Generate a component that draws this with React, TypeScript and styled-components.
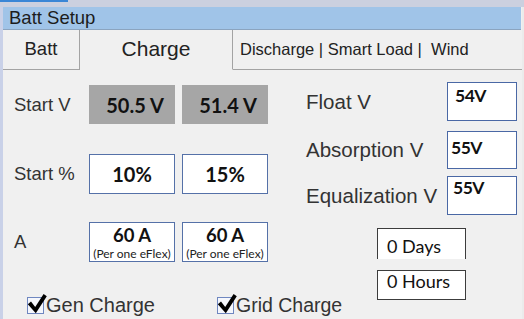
import React from "react";
import styled, { createGlobalStyle } from "styled-components";

const GlobalStyle = createGlobalStyle`
  html, body { margin: 0; padding: 0; background: #f0f0f0; }
  body {
    width: 524px; height: 319px; overflow: hidden;
    font-family: "Liberation Sans", Arial, sans-serif;
  }
  * { box-sizing: border-box; }
`;

const Window = styled.div`
  width: 524px;
  height: 319px;
  display: flex;
  flex-direction: column;
  background: #ebebeb;
`;

const TopStrip = styled.div`
  height: 7px;
  flex-shrink: 0;
  background: #cbd0df;
  display: flex;
`;

const Accent = styled.div`
  width: 68px;
  height: 2px;
  background: #3a86d6;
`;

const Body = styled.div`
  flex: 1;
  display: flex;
  min-height: 0;
`;

const SideStrip = styled.div`
  width: 3px;
  flex-shrink: 0;
  background: #c9d1e8;
`;

const Main = styled.div`
  flex: 1;
  display: flex;
  flex-direction: column;
  background: #f0f0f0;
  margin-right: 2px;
`;

const TitleBar = styled.div`
  height: 23px;
  flex-shrink: 0;
  margin-right: 1px;
  background: #a0c4e8;
  border-bottom: 1px solid #8ba4bf;
  padding-left: 6px;
  font-size: 18.5px;
  line-height: 21px;
  color: #1c1c1c;
`;

const Tabs = styled.div`
  height: 40px;
  flex-shrink: 0;
  display: flex;
`;

const Tab = styled.div<{ $w?: number; $active?: boolean; $size: number; $left?: boolean }>`
  height: 40px;
  ${(p) => (p.$w ? `width: ${p.$w}px; flex-shrink: 0;` : "flex: 1;")}
  display: flex;
  align-items: center;
  justify-content: ${(p) => (p.$left ? "flex-start" : "center")};
  padding-left: ${(p) => (p.$left ? "7px" : "0")};
  padding-bottom: 1px;
  border-right: ${(p) => (p.$w ? "1px solid #a3a3a3" : "none")};
  border-bottom: ${(p) => (p.$active ? "1px solid transparent" : "1px solid #a3a3a3")};
  font-size: ${(p) => p.$size}px;
  color: #222;
  white-space: pre;
`;

const Content = styled.div`
  flex: 1;
  display: flex;
  min-height: 0;
`;

const LeftPane = styled.div`
  width: 300px;
  flex-shrink: 0;
  display: flex;
  flex-direction: column;
  padding-left: 11px;
`;

const FieldRow = styled.div<{ $top: number; $h: number }>`
  display: flex;
  align-items: center;
  margin-top: ${(p) => p.$top}px;
  height: ${(p) => p.$h}px;
`;

const FieldLabel = styled.div`
  width: 75px;
  font-size: 18.5px;
  color: #333;
`;

const BoxGroup = styled.div`
  display: flex;
  gap: 7px;
  height: 100%;
`;

const ValueBox = styled.div<{ $grey?: boolean }>`
  width: 86px;
  height: 100%;
  display: flex;
  flex-direction: column;
  align-items: center;
  justify-content: center;
  background: ${(p) => (p.$grey ? "#a6a6a6" : "#ffffff")};
  border: 1px solid ${(p) => (p.$grey ? "#a6a6a6" : "#5571a8")};
  padding-left: ${(p) => (p.$grey ? "6px" : "0")};
  font-family: Lato, "Open Sans", sans-serif;
  font-weight: 700;
  font-size: 20px;
  color: #111;
`;

const AmpValue = styled.div`
  font-family: Lato, sans-serif;
  font-weight: 700;
  font-size: 18.5px;
  line-height: 22px;
`;

const AmpNote = styled.div`
  font-family: Lato, sans-serif;
  font-weight: 400;
  font-size: 12px;
  line-height: 15px;
  color: #222;
  white-space: nowrap;
`;

const CheckRow = styled.div`
  display: flex;
  align-items: center;
  gap: 62px;
  margin-top: 35px;
  padding-left: 13px;
  height: 17px;
  white-space: nowrap;
`;

const CheckItem = styled.div`
  display: flex;
  align-items: center;
  gap: 2px;
`;

const CheckBox = styled.div`
  position: relative;
  width: 17px;
  height: 17px;
  flex-shrink: 0;
  border: 1px solid #6f87c0;
  background: #f5f7fc;
`;

const CheckMark = styled.svg`
  position: absolute;
  left: -1px;
  top: -2px;
  overflow: visible;
`;

const CheckText = styled.span<{ $size: number }>`
  font-size: ${(p) => p.$size}px;
  color: #333;
`;

const RightPane = styled.div`
  flex: 1;
  display: flex;
  flex-direction: column;
  padding-left: 3px;
`;

const RightRow = styled.div<{ $top: number; $h: number }>`
  display: grid;
  grid-template-columns: 141px 70px;
  align-items: center;
  margin-top: ${(p) => p.$top}px;
  height: ${(p) => p.$h}px;
`;

const RightLabel = styled.div`
  font-size: 20.5px;
  color: #333;
  white-space: nowrap;
`;

const SetBox = styled.div<{ $pt: number; $pl: number }>`
  height: 100%;
  background: #fff;
  border: 1px solid #4a68a5;
  padding: ${(p) => p.$pt}px 0 0 ${(p) => p.$pl}px;
  font-family: Lato, sans-serif;
  font-weight: 700;
  font-size: 17.5px;
  line-height: 20px;
  letter-spacing: -0.5px;
  color: #111;
`;

const TimeBox = styled.div<{ $top: number; $h: number; $pt: number; $open?: boolean }>`
  width: 89px;
  height: ${(p) => p.$h}px;
  margin-top: ${(p) => p.$top}px;
  margin-left: 71px;
  background: #fff;
  border: 1px solid #3c3c3c;
  border-bottom: ${(p) => (p.$open ? "none" : "1px solid #3c3c3c")};
  padding: ${(p) => p.$pt}px 0 0 9px;
  font-family: Lato, sans-serif;
  font-size: 18px;
  line-height: 21px;
  color: #111;
`;

const Check = () => (
  <CheckMark width="20" height="20" viewBox="0 0 20 20">
    <path d="M0.8 8.2 L4 5.6 L8.2 11 L16.6 -2 L19.8 0.2 L8.8 17.2 Z" fill="#000" />
  </CheckMark>
);

export default function App() {
  return (
    <>
      <GlobalStyle />
      <Window>
        <TopStrip>
          <Accent />
        </TopStrip>
        <Body>
          <SideStrip />
          <Main>
            <TitleBar>Batt Setup</TitleBar>
            <Tabs>
              <Tab $w={77} $size={18.5}>Batt</Tab>
              <Tab $w={153} $size={21} $active>Charge</Tab>
              <Tab $size={16.5} $left>{"Discharge | Smart Load |  Wind"}</Tab>
            </Tabs>
            <Content>
              <LeftPane>
                <FieldRow $top={15} $h={39}>
                  <FieldLabel>Start V</FieldLabel>
                  <BoxGroup>
                    <ValueBox $grey>50.5 V</ValueBox>
                    <ValueBox $grey>51.4 V</ValueBox>
                  </BoxGroup>
                </FieldRow>
                <FieldRow $top={30} $h={40}>
                  <FieldLabel>Start %</FieldLabel>
                  <BoxGroup>
                    <ValueBox>10%</ValueBox>
                    <ValueBox>15%</ValueBox>
                  </BoxGroup>
                </FieldRow>
                <FieldRow $top={28} $h={40}>
                  <FieldLabel>A</FieldLabel>
                  <BoxGroup>
                    <ValueBox>
                      <AmpValue>60 A</AmpValue>
                      <AmpNote>(Per one eFlex)</AmpNote>
                    </ValueBox>
                    <ValueBox>
                      <AmpValue>60 A</AmpValue>
                      <AmpNote>(Per one eFlex)</AmpNote>
                    </ValueBox>
                  </BoxGroup>
                </FieldRow>
                <CheckRow>
                  <CheckItem>
                    <CheckBox>
                      <Check />
                    </CheckBox>
                    <CheckText $size={20}>Gen Charge</CheckText>
                  </CheckItem>
                  <CheckItem>
                    <CheckBox>
                      <Check />
                    </CheckBox>
                    <CheckText $size={19.5}>Grid Charge</CheckText>
                  </CheckItem>
                </CheckRow>
              </LeftPane>
              <RightPane>
                <RightRow $top={12} $h={39}>
                  <RightLabel>Float V</RightLabel>
                  <SetBox $pt={3} $pl={7}>54V</SetBox>
                </RightRow>
                <RightRow $top={10} $h={38}>
                  <RightLabel>Absorption V</RightLabel>
                  <SetBox $pt={6} $pl={3}>55V</SetBox>
                </RightRow>
                <RightRow $top={7} $h={39}>
                  <RightLabel>Equalization V</RightLabel>
                  <SetBox $pt={1} $pl={5}>55V</SetBox>
                </RightRow>
                <TimeBox $top={13} $h={31} $pt={7} $open>0 Days</TimeBox>
                <TimeBox $top={11} $h={30} $pt={0}>0 Hours</TimeBox>
              </RightPane>
            </Content>
          </Main>
        </Body>
      </Window>
    </>
  );
}
